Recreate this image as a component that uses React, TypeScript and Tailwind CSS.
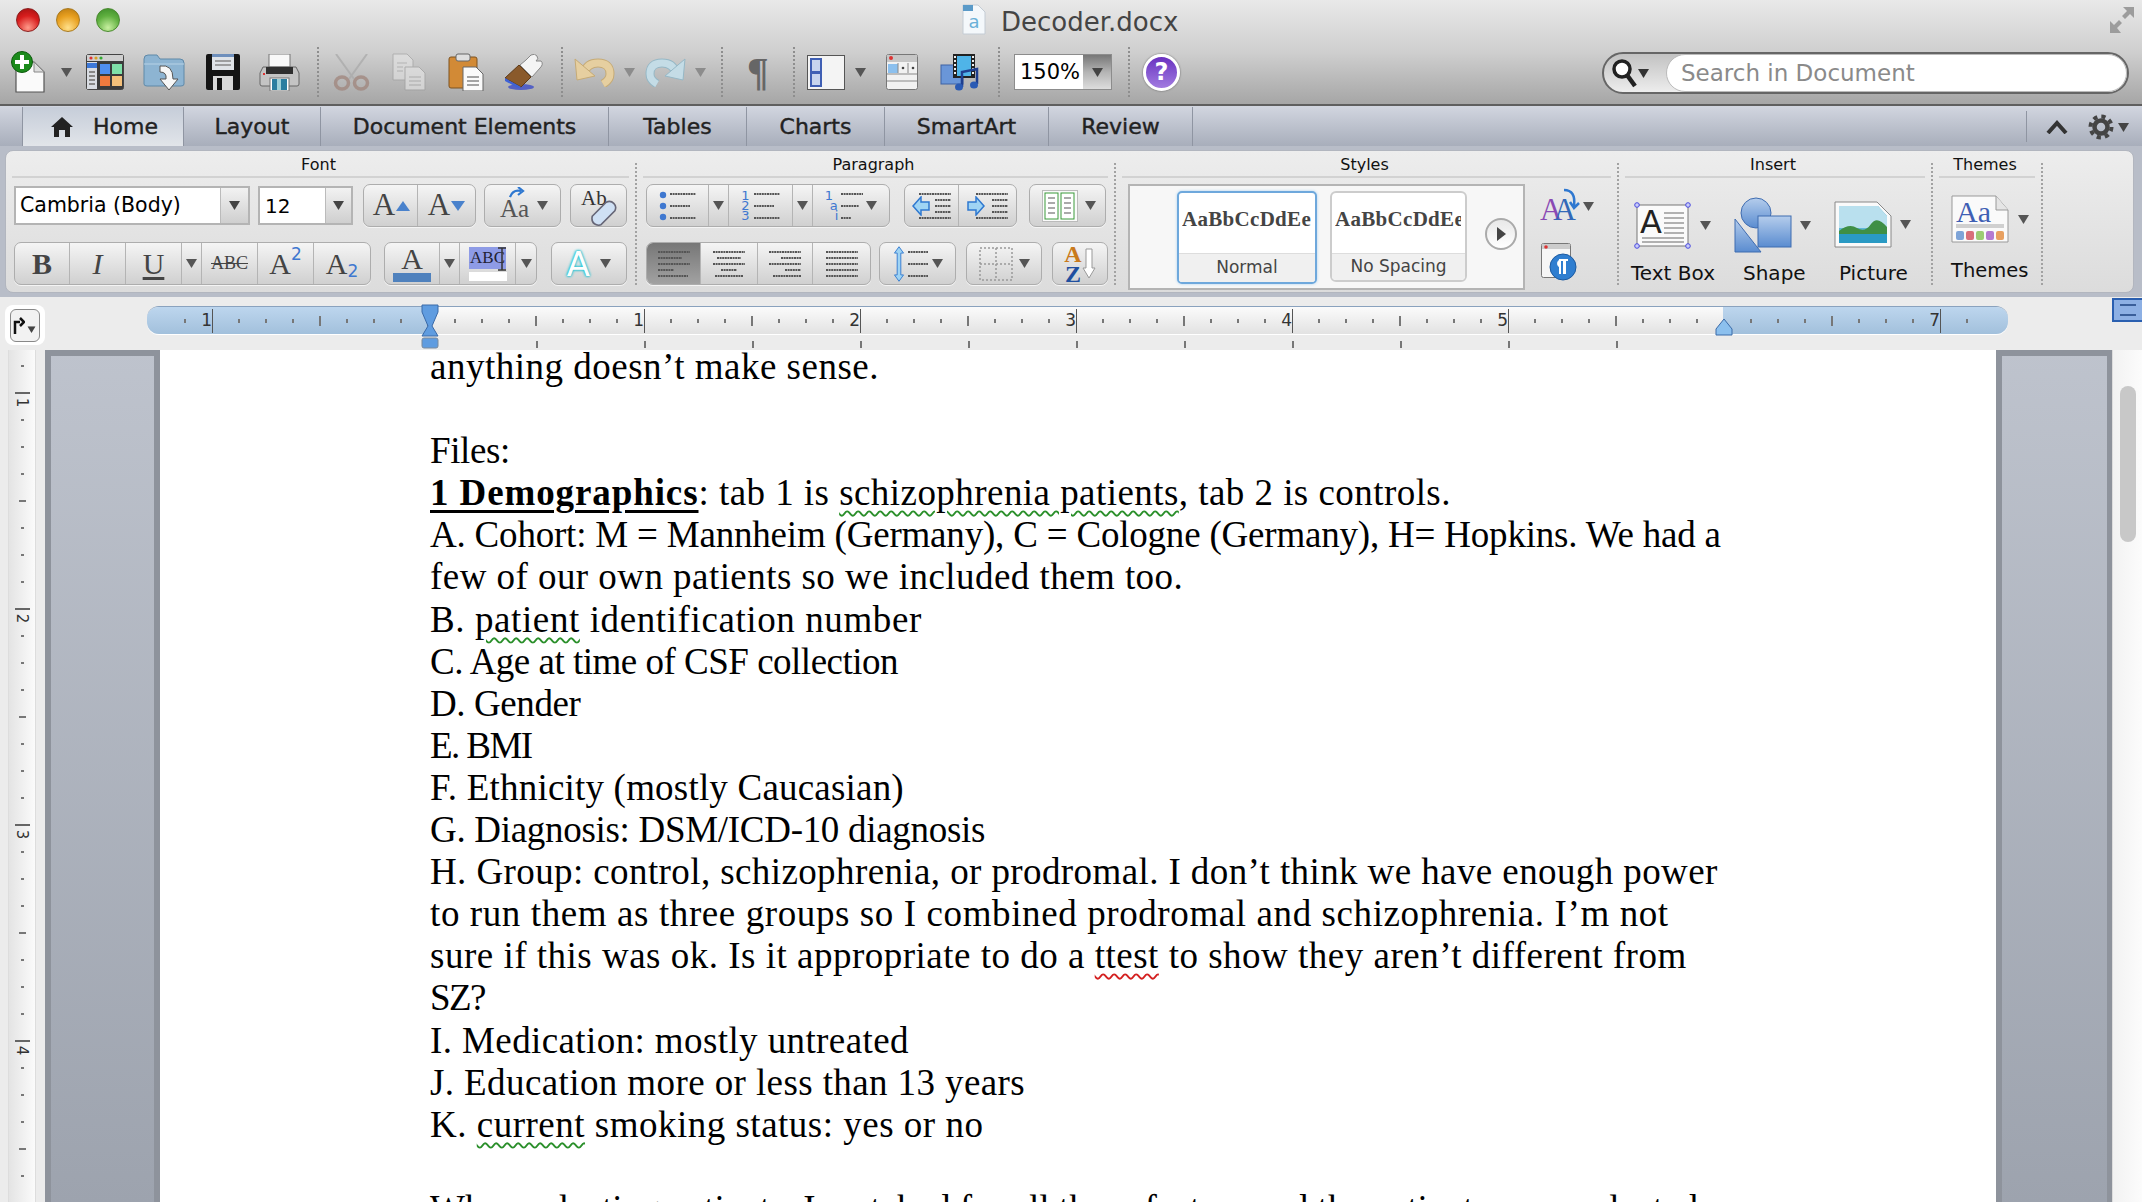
import type { ReactNode } from 'react';

const ui = "[font-family:'DejaVu_Sans',sans-serif]";
const serif = "[font-family:'Liberation_Serif',serif]";

function Tri({ className = '', fill = '#555' }: { className?: string; fill?: string }) {
  return (
    <svg width="11" height="9" viewBox="0 0 11 9" className={`shrink-0 ${className}`}>
      <path d="M0 0h11L5.5 9z" fill={fill} />
    </svg>
  );
}

function Lines({ w = 30, rows = [30, 22, 30, 16, 30] }: { w?: number; rows?: number[] }) {
  return (
    <svg width={w} height={rows.length * 6} viewBox={`0 0 ${w} ${rows.length * 6}`}>
      {rows.map((r, i) => (
        <line key={i} x1="0" x2={r} y1={i * 6 + 3} y2={i * 6 + 3} stroke="#555" strokeWidth="2" strokeDasharray="2 .6" />
      ))}
    </svg>
  );
}

function OffsetLines({ rows }: { rows: number[][] }) {
  return (
    <svg width="32" height="30" viewBox="0 0 32 30">
      {rows.map(([a, b], i) => (
        <line key={i} x1={a} x2={a + b} y1={i * 6 + 3} y2={i * 6 + 3} stroke="#555" strokeWidth="2" strokeDasharray="2 .6" />
      ))}
    </svg>
  );
}

function Group({ className = '', children }: { className?: string; children: ReactNode }) {
  return (
    <div className={`flex h-[43px] shrink-0 overflow-hidden rounded-[7px] border border-[#adadad] bg-linear-to-b from-[#f5f5f5] to-[#d0d0d0] shadow-[0_1px_0_#f4f4f4] ${className}`}>
      {children}
    </div>
  );
}

function Cell({ className = '', children }: { className?: string; children?: ReactNode }) {
  return (
    <div className={`flex h-full shrink-0 items-center justify-center border-r border-[#b4b4b4] last:border-r-0 ${className}`}>
      {children}
    </div>
  );
}

function Sep() {
  return <div className="mt-[12px] mb-[7px] w-0 shrink-0 border-l-2 border-dotted border-[#a2a2a2]" />;
}

function ToolSep({ className = '' }: { className?: string }) {
  return <div className={`h-[50px] w-0 shrink-0 border-l-2 border-dotted border-[#8e8e8e] ${className}`} />;
}

function GroupHead({ label }: { label: string }) {
  return (
    <div className={`mx-[6px] flex h-[27px] shrink-0 justify-center border-b-2 border-[#d2d2d2] pt-[3px] pr-[4px] text-[16px] leading-[22px] text-[#111] ${ui}`}>
      {label}
    </div>
  );
}

function NewDocIcon() {
  return (
    <svg width="36" height="42" viewBox="0 0 36 42">
      <path d="M5 11h18l10 10v20H5z" fill="#fafafa" stroke="#555" strokeWidth="1.2" />
      <path d="M23 11v10h10z" fill="#ddd" stroke="#888" />
      <circle cx="11" cy="11" r="10.500" fill="#1b8a1b" stroke="#0d5a0d" />
      <path d="M9 4h4v5h5v4h-5v5H9v-5H4V9h5z" fill="#fff" />
    </svg>
  );
}

function GalleryIcon() {
  return (
    <svg width="38" height="36" viewBox="0 0 38 36">
      <rect x=".5" y=".5" width="37" height="35" rx="2" fill="#3b3b3b" stroke="#444" />
      <rect x="1" y="1" width="36" height="6" fill="#cfcfcf" />
      <circle cx="5" cy="4" r="1.600" fill="#d33" />
      <circle cx="10" cy="4" r="1.600" fill="#d9a020" />
      <circle cx="15" cy="4" r="1.600" fill="#3a3" />
      <rect x="1" y="8" width="10" height="27" fill="#d8dce2" />
      <rect x="1" y="9" width="10" height="5" fill="#3c78d8" />
      <path d="M3 18h6M3 22h6M3 26h6M3 30h6" stroke="#888" strokeWidth="2" />
      <rect x="14" y="10" width="10" height="10" fill="#4f8ef0" />
      <rect x="26" y="10" width="10" height="10" fill="#7fe0a8" />
      <rect x="14" y="22" width="10" height="10" fill="#ef7a3e" />
      <rect x="26" y="22" width="10" height="10" fill="#f4c07a" />
    </svg>
  );
}

function OpenIcon() {
  return (
    <svg width="42" height="38" viewBox="0 0 42 38">
      <path d="M1 6q0-4 4-4h9l3 4h20q4 0 4 4v21q0 2-3 2H4q-3 0-3-2z" fill="#8db4d2" stroke="#5f89a8" />
      <path d="M1 11h40" stroke="#b7d2e6" />
      <path d="M17 13q13-2 13 13h5l-9 11-9-11h6q1-7-6-7z" fill="#f7f7f7" stroke="#555" />
    </svg>
  );
}

function SaveIcon() {
  return (
    <svg width="36" height="36" viewBox="0 0 36 36">
      <path d="M1 2q0-2 2-2h30q2 0 2 2v32q0 2-2 2H3q-2 0-2-2z" fill="#151515" />
      <rect x="7" y="0" width="22" height="16" fill="#dfe3e8" />
      <rect x="7" y="0" width="22" height="3" fill="#6e8fbc" />
      <path d="M10 7h16M10 11h16" stroke="#888" strokeWidth="1.5" />
      <rect x="8" y="22" width="20" height="14" fill="#d8d8d8" />
      <rect x="12" y="24" width="5" height="12" fill="#111" />
    </svg>
  );
}

function PrintIcon() {
  return (
    <svg width="41" height="37" viewBox="0 0 41 37">
      <rect x="10" y="0" width="21" height="13" fill="#f8f8f8" stroke="#777" />
      <path d="M4 13h33l3 6v11q0 2-2 2H3q-2 0-2-2V19z" fill="#c4c4c4" stroke="#666" />
      <rect x="7" y="13" width="27" height="7" fill="#2f2f2f" />
      <rect x="4" y="19" width="2" height="2" fill="#d33" />
      <rect x="11" y="24" width="19" height="13" fill="#fff" stroke="#777" />
      <rect x="13" y="25" width="15" height="11" fill="#2b7ea0" />
      <path d="M18 25h4v11h-4z" fill="#9fd0d8" />
    </svg>
  );
}

function ScissorsIcon() {
  return (
    <svg width="37" height="37" viewBox="0 0 37 37" opacity=".75">
      <path d="M3 0l18 25M34 0L16 25" stroke="#aaa" strokeWidth="2" fill="none" />
      <ellipse cx="9" cy="29" rx="6.500" ry="6" fill="none" stroke="#a0857c" strokeWidth="3.500" />
      <ellipse cx="28" cy="29" rx="6.500" ry="6" fill="none" stroke="#a0857c" strokeWidth="3.500" />
    </svg>
  );
}

function CopyIcon() {
  return (
    <svg width="34" height="38" viewBox="0 0 34 38" opacity=".55">
      <path d="M1 1h14l6 6v20H1z" fill="#e9e9e9" stroke="#999" />
      <path d="M13 14h14l6 6v17H13z" fill="#eee" stroke="#999" />
      <path d="M17 24h12M17 28h12M17 32h12M5 10h10M5 14h6M5 18h6" stroke="#bbb" strokeWidth="1.5" />
    </svg>
  );
}

function PasteIcon() {
  return (
    <svg width="36" height="38" viewBox="0 0 36 38">
      <rect x="1" y="4" width="28" height="31" rx="2" fill="#d28a36" stroke="#7d5220" />
      <rect x="8" y="1" width="14" height="7" rx="2" fill="#dfdfdf" stroke="#666" />
      <path d="M15 14h13l7 7v17H15z" fill="#fafafa" stroke="#666" />
      <path d="M19 24h12M19 28h12M19 32h12" stroke="#888" strokeWidth="1.5" />
    </svg>
  );
}

function BrushIcon() {
  return (
    <svg width="41" height="36" viewBox="0 0 41 36">
      <ellipse cx="17" cy="33" rx="13" ry="3" fill="#3c4cc8" opacity=".8" />
      <path d="M15 11l12 12-10 10L1 24z" fill="#8a5a2b" stroke="#5e3a17" />
      <path d="M1 24l16 9-3 1L1 27z" fill="#3f62d6" />
      <path d="M16 11l6-5 5-5q4-2 6 1t-1 5l5 0q3 3-1 7l-8 9z" fill="#f4f4f4" stroke="#888" />
    </svg>
  );
}

function UndoIcon({ flip = false, color = '#e6cfa0', stroke = '#c6ab76' }: { flip?: boolean; color?: string; stroke?: string }) {
  const arc = 'M10 16Q13 6 24 6Q36 6 36 17Q36 23 29 27';
  return (
    <svg width="41" height="30" viewBox="0 0 41 30" className={flip ? '-scale-x-100' : ''}>
      <path d={arc} fill="none" stroke={stroke} strokeWidth="9" />
      <path d={arc} fill="none" stroke={color} strokeWidth="7" />
      <path d="M1 2l2 21 18-4z" fill={color} stroke={stroke} />
    </svg>
  );
}

function SidebarIcon() {
  return (
    <svg width="38" height="35" viewBox="0 0 38 35">
      <rect x=".5" y=".5" width="37" height="34" fill="#f4f4f4" stroke="#555" />
      <rect x="3" y="3" width="12" height="29" fill="#3f5fb4" />
      <rect x="5" y="5" width="8" height="11" fill="#c7d4ee" />
      <rect x="5" y="19" width="8" height="11" fill="#c7d4ee" />
    </svg>
  );
}

function ToolboxIcon() {
  return (
    <svg width="32" height="36" viewBox="0 0 32 36">
      <rect x=".5" y=".5" width="31" height="35" rx="2" fill="#f2f2f2" stroke="#777" />
      <rect x="1" y="1" width="30" height="7" fill="#c6c6c6" />
      <circle cx="5" cy="4" r="2" fill="#d33" />
      <rect x="2" y="10" width="10" height="9" fill="#8cc0ee" />
      <path d="M1 20h30M1 27h30M12 9v10M22 9v10" stroke="#888" />
      <circle cx="17" cy="14" r="1.300" fill="#444" />
      <circle cx="27" cy="14" r="1.300" fill="#444" />
    </svg>
  );
}

function MediaIcon() {
  return (
    <svg width="40" height="37" viewBox="0 0 40 37">
      <rect x="1" y="11" width="22" height="19" fill="#6a96d8" stroke="#3e62a4" />
      <rect x="13" y="0" width="22" height="24" fill="#222" />
      <rect x="17" y="2" width="14" height="20" fill="#4fb4e8" />
      <path d="M15 2v20M33 2v20" stroke="#eee" strokeWidth="2" strokeDasharray="2 2" />
      <path d="M22 33V18l15-3v15" fill="none" stroke="#1f3f8f" strokeWidth="2.500" />
      <ellipse cx="19" cy="33" rx="4" ry="3.500" fill="#2a5ab4" />
      <ellipse cx="34" cy="31" rx="4" ry="3.500" fill="#2a5ab4" />
    </svg>
  );
}

function SearchGlass() {
  return (
    <svg width="26" height="30" viewBox="0 0 26 30">
      <circle cx="11" cy="11" r="8" fill="#fff" stroke="#222" strokeWidth="3.500" />
      <path d="M16 17l8 11" stroke="#222" strokeWidth="4.500" />
    </svg>
  );
}

function TextBoxIcon() {
  return (
    <div className="relative h-[47px] w-[57px] shrink-0">
      <svg width="57" height="47" viewBox="0 0 57 47">
        <rect x="3" y="3" width="51" height="41" fill="#fafafa" stroke="#777" />
        <path d="M30 11h20M30 16h20M30 21h20M30 26h20M30 31h20M8 36h42M8 40h42" stroke="#999" strokeWidth="1.500" />
        {[[3, 3], [54, 3], [3, 44], [54, 44]].map(([x, y]) => (
          <circle key={x * y + x} cx={x} cy={y} r="2.300" fill="#c9cdf8" stroke="#4a4ae0" />
        ))}
      </svg>
      <span className={`absolute top-[4px] left-[6px] text-[32px] leading-[32px] text-[#222] ${ui}`}>A</span>
    </div>
  );
}

function ShapeIcon() {
  return (
    <svg width="58" height="56" viewBox="0 0 58 56">
      <defs>
        <linearGradient id="shapeBlue" x1="0" y1="0" x2="0" y2="1">
          <stop offset="0" stopColor="#b5cdec" />
          <stop offset="1" stopColor="#5a8cd0" />
        </linearGradient>
      </defs>
      <path d="M1 22l26 33H1z" fill="url(#shapeBlue)" stroke="#3f6cb0" />
      <circle cx="22" cy="16" r="15" fill="url(#shapeBlue)" stroke="#3f6cb0" />
      <rect x="24" y="19" width="33" height="31" fill="url(#shapeBlue)" stroke="#3f6cb0" />
    </svg>
  );
}

function PictureIcon() {
  return (
    <svg width="58" height="47" viewBox="0 0 58 47">
      <path d="M1 1h42l14 14v31H1z" fill="#fafafa" stroke="#888" />
      <path d="M5 5h39l9 10v27H5z" fill="#5fb7d8" />
      <path d="M5 5h39l9 10v12H5z" fill="#b9e0ee" />
      <path d="M5 30q10-8 18-3t14-4 16 3v8H5z" fill="#3f8f45" />
      <rect x="5" y="33" width="48" height="9" fill="#2a9ac4" />
    </svg>
  );
}

function ThemesIcon() {
  return (
    <svg width="58" height="48" viewBox="0 0 58 48">
      <path d="M1 1h44l12 14v32H1z" fill="#fafafa" stroke="#999" />
      <path d="M45 1v14h12" fill="#e5e5e5" stroke="#999" />
      <rect x="5" y="29" width="48" height="4" fill="#d0d0d0" />
      {['#7ea4d8', '#d8707a', '#9ccc74', '#b47ad0', '#e8a060'].map((c, i) => (
        <rect key={c} x={5 + i * 10} y="36" width="8" height="9" rx="2" fill={c} />
      ))}
    </svg>
  );
}

function AaStyleIcon() {
  return (
    <div className={`relative flex h-[37px] w-[38px] items-end text-[31px] leading-[31px] ${serif}`}>
      <span className="text-[#8a4ab4]">A</span>
      <span className="-ml-[9px] text-[#3268b8]">A</span>
      <svg width="18" height="24" viewBox="0 0 18 24" className="absolute top-0 left-[22px]">
        <path d="M2 2q12 0 10 16M8 14l4 6 5-5" fill="none" stroke="#2f78d0" strokeWidth="2.500" />
      </svg>
    </div>
  );
}

function ParaStyleIcon() {
  return (
    <svg width="37" height="38" viewBox="0 0 37 38">
      <rect x=".5" y=".5" width="29" height="34" rx="2" fill="#f6f6f6" stroke="#777" />
      <rect x="1" y="1" width="28" height="5" fill="#ccc" />
      <circle cx="5" cy="4" r="1.800" fill="#d33" />
      <circle cx="22" cy="24" r="13" fill="#2f7ed0" stroke="#1c5aa0" />
      <path d="M19 31V17h8M23 31V17M24 31V17" stroke="#fff" strokeWidth="2" fill="none" />
      <path d="M20 17a3.500 3.500 0 000 7" fill="#fff" stroke="#fff" />
    </svg>
  );
}

function RulerTick({ k }: { k: number }) {
  const numbers: Record<number, string> = { [-8]: '1', 8: '1', 16: '2', 24: '3', 32: '4', 40: '5', 56: '7' };
  const label = numbers[k];
  return (
    <div className="flex h-full w-[27px] shrink-0 items-center justify-end">
      {label ? (
        <>
          <span className={`mr-[1px] text-[17px] leading-none text-[#333] ${ui}`}>{label}</span>
          <span className="h-[24px] w-px -translate-x-[1px] bg-[#555]" />
        </>
      ) : (
        <span className={`w-[2px] translate-x-[-1px] bg-[#777] ${k % 4 === 0 ? 'h-[10px]' : 'h-[4px]'}`} />
      )}
    </div>
  );
}

function range(a: number, b: number) {
  return Array.from({ length: b - a + 1 }, (_, i) => a + i);
}

function VRulerTick({ i }: { i: number }) {
  const label = i % 8 === 1 ? String((i - 1) / 8 + 1) : '';
  return (
    <div className="flex h-[27px] shrink-0 flex-col items-center">
      {label ? (
        <>
          <span className="h-[2px] w-[15px] shrink-0 bg-[#666]" />
          <span className={`mt-[1px] rotate-90 text-[15px] leading-none text-[#333] ${ui}`}>{label}</span>
        </>
      ) : (
        <span className={`h-[2px] bg-[#777] ${i % 4 === 1 ? 'w-[7px]' : 'w-[3px]'}`} />
      )}
    </div>
  );
}

function Squiggle({ children, color = 'decoration-[#2a8f2a]' }: { children: ReactNode; color?: string }) {
  return <span className={`underline decoration-wavy decoration-[2px] underline-offset-[5px] ${color}`}>{children}</span>;
}

const docLine = 'h-[42.1px] whitespace-nowrap';

export default function App() {
  return (
    <div className="flex h-[1202px] w-[2142px] flex-col overflow-hidden bg-[#ececec]">
      {/* Title bar and toolbar */}
      <header className="h-[104px] shrink-0 bg-linear-to-b from-[#e9e9e9] via-[#cfcfcf] to-[#a6a6a6]">
        <div className="flex h-[40px] items-start pt-[8px]">
          <div className="ml-[16px] flex gap-[16px]">
            <span className="size-[24px] rounded-full border border-[#8a2020] bg-[radial-gradient(circle_at_50%_85%,#ff9a8a,#d81e1e_55%,#a01010)]" />
            <span className="size-[24px] rounded-full border border-[#a87a20] bg-[radial-gradient(circle_at_50%_85%,#ffe08a,#e8a020_55%,#b87810)]" />
            <span className="size-[24px] rounded-full border border-[#4a8a30] bg-[radial-gradient(circle_at_50%_85%,#c8f0a0,#60b040_55%,#3a8a28)]" />
          </div>
          <svg width="24" height="31" viewBox="0 0 24 31" className="-mt-[4px] ml-[842px] shrink-0">
            <path d="M1 1h15l7 7v22H1z" fill="#f4f8fb" stroke="#c4ccd4" />
            <rect x="1" y="1" width="10" height="6" fill="#5a9ac8" />
            <text x="12" y="24" fontSize="18" textAnchor="middle" fill="#6ab0d8" fontFamily="DejaVu Sans">a</text>
          </svg>
          <span className={`ml-[15px] text-[26px] leading-[28px] text-[#444] ${ui}`}>Decoder.docx</span>
          <svg width="26" height="28" viewBox="0 0 26 28" className="-mt-[2px] ml-[931px] shrink-0">
            <path d="M14 1h11v11l-4-4-5 5-3-3 5-5zM1 27V15l4 4 5-5 3 3-5 5 4 5z" fill="#9c9c9c" />
          </svg>
        </div>

        <div className="flex h-[64px] items-center">
          <div className="ml-[11px]"><NewDocIcon /></div>
          <Tri className="ml-[14px]" />
          <div className="ml-[14px]"><GalleryIcon /></div>
          <div className="ml-[19px]"><OpenIcon /></div>
          <div className="ml-[20px]"><SaveIcon /></div>
          <div className="ml-[18px]"><PrintIcon /></div>
          <ToolSep className="ml-[17px]" />
          <div className="ml-[14px]"><ScissorsIcon /></div>
          <div className="ml-[22px]"><CopyIcon /></div>
          <div className="ml-[22px]"><PasteIcon /></div>
          <div className="ml-[20px]"><BrushIcon /></div>
          <ToolSep className="ml-[16px]" />
          <div className="ml-[11px]"><UndoIcon /></div>
          <Tri className="ml-[9px]" fill="#8c8c8c" />
          <div className="ml-[10px]"><UndoIcon flip color="#c4dce6" stroke="#96b8c6" /></div>
          <Tri className="ml-[9px]" fill="#8c8c8c" />
          <ToolSep className="ml-[15px]" />
          <span className={`ml-[24px] w-[24px] text-[40px] leading-none font-bold text-[#666] ${serif}`}>¶</span>
          <ToolSep className="ml-[22px]" />
          <div className="ml-[12px]"><SidebarIcon /></div>
          <Tri className="ml-[10px]" />
          <div className="ml-[20px]"><ToolboxIcon /></div>
          <div className="ml-[22px]"><MediaIcon /></div>
          <ToolSep className="ml-[18px]" />
          <div className="ml-[14px] flex h-[36px] w-[98px] shrink-0 border border-[#8c8c8c] bg-white">
            <span className={`flex w-[68px] items-center pl-[5px] text-[21px] leading-none text-black ${ui}`}>150%</span>
            <span className="flex flex-1 items-center justify-center bg-linear-to-b from-[#777] via-[#b4b4b4] to-[#ddd]">
              <Tri fill="#444" />
            </span>
          </div>
          <ToolSep className="ml-[16px]" />
          <div className={`ml-[13px] flex size-[37px] shrink-0 items-center justify-center rounded-full border-[3px] border-white bg-linear-to-b from-[#6a2fc0] to-[#a27ae0] text-[24px] leading-none font-bold text-white shadow-[0_0_2px_#555] ${ui}`}>?</div>
          <div className="mt-[2px] ml-[422px] flex h-[42px] w-[527px] shrink-0 rounded-full border-2 border-[#666] bg-linear-to-b from-[#c2c2c2] to-[#ededed]">
            <div className="flex w-[62px] shrink-0 items-center pl-[7px]">
              <SearchGlass />
              <Tri fill="#333" className="ml-[1px]" />
            </div>
            <div className={`flex flex-1 items-center rounded-full border border-[#bbb] bg-white pl-[14px] text-[23px] leading-none text-[#8a8a8a] ${ui}`}>
              Search in Document
            </div>
          </div>
        </div>
      </header>
      <div className="h-[2px] shrink-0 bg-[#5f5f5f]" />

      {/* Tabs */}
      <nav className={`flex h-[40px] shrink-0 items-stretch bg-linear-to-b from-[#d2d6e0] to-[#a8aebb] pt-[1px] text-[22px] text-[#222] [-webkit-text-stroke:0.4px_#222] ${ui}`}>
        <div className="w-[23px] border-r border-[#8f95a2]" />
        <div className="-mb-[4px] flex w-[160px] items-center gap-[20px] bg-linear-to-b from-[#c6cdd9] to-[#e4e7eb] pb-[4px] pl-[28px]">
          <svg width="22" height="20" viewBox="0 0 22 20" className="shrink-0">
            <path d="M11 0l11 10h-3v10h-5v-7H8v7H3V10H0z" fill="#222" />
          </svg>
          <span>Home</span>
        </div>
        <div className="flex w-[138px] items-center justify-center border-x border-[#8f95a2]">Layout</div>
        <div className="flex w-[288px] items-center justify-center border-r border-[#8f95a2]">Document Elements</div>
        <div className="flex w-[138px] items-center justify-center border-r border-[#8f95a2]">Tables</div>
        <div className="flex w-[138px] items-center justify-center border-r border-[#8f95a2]">Charts</div>
        <div className="flex w-[164px] items-center justify-center border-r border-[#8f95a2]">SmartArt</div>
        <div className="flex w-[144px] items-center justify-center border-r border-[#8f95a2]">Review</div>
        <div className="my-[4px] ml-[833px] w-px bg-[#8f95a2]" />
        <svg width="22" height="14" viewBox="0 0 22 14" className="mt-[13px] ml-[19px]">
          <path d="M2 13l9-10 9 10" fill="none" stroke="#333" strokeWidth="4" />
        </svg>
        <svg width="26" height="26" viewBox="0 0 26 26" className="mt-[7px] ml-[20px]">
          <circle cx="13" cy="13" r="6.500" fill="none" stroke="#444" strokeWidth="4.500" />
          <circle cx="13" cy="13" r="10.500" fill="none" stroke="#444" strokeWidth="4" strokeDasharray="4.200 4.050" />
        </svg>
        <Tri className="mt-[16px] ml-[4px]" fill="#444" />
      </nav>

      {/* Ribbon */}
      <div className="h-[149px] shrink-0 bg-[#b8bdc8] px-[5px] pt-[4px] pb-[2px]">
        <div className="flex h-full w-[2129px] rounded-t-[8px] rounded-b-[8px] border border-[#b2b6bf] bg-linear-to-b from-[#ededed] to-[#dcdcdc]">
          {/* Font */}
          <section className="flex w-[629px] shrink-0 flex-col">
            <GroupHead label="Font" />
            <div className="mt-[8px] flex pl-[8px]">
              <div className="flex h-[39px] w-[236px] shrink-0 border-2 border-[#b4b4b4] bg-white">
                <span className={`flex w-[205px] items-center border-r border-[#bbb] pl-[4px] text-[20.500px] leading-none text-black ${ui}`}>Cambria (Body)</span>
                <span className="flex flex-1 items-center justify-center bg-linear-to-b from-[#f2f2f2] to-[#cfcfcf]"><Tri fill="#444" /></span>
              </div>
              <div className="ml-[8px] flex h-[39px] w-[95px] shrink-0 border-2 border-[#b4b4b4] bg-white">
                <span className={`flex w-[66px] items-center border-r border-[#bbb] pl-[5px] text-[20px] leading-none text-black ${ui}`}>12</span>
                <span className="flex flex-1 items-center justify-center bg-linear-to-b from-[#f2f2f2] to-[#cfcfcf]"><Tri fill="#444" /></span>
              </div>
              <Group className="-mt-[2px] ml-[10px]">
                <Cell className={`w-[54px] gap-[1px] pl-[2px] text-[31px] text-[#444] ${serif}`}>A<svg width="14" height="10" viewBox="0 0 14 10"><path d="M7 0l7 10H0z" fill="#4a82cc" /></svg></Cell>
                <Cell className={`w-[57px] gap-[1px] text-[31px] text-[#444] ${serif}`}>A<svg width="14" height="10" viewBox="0 0 14 10"><path d="M7 10l7-10H0z" fill="#4a82cc" /></svg></Cell>
              </Group>
              <Group className="-mt-[2px] ml-[8px]">
                <Cell className="w-[75px] gap-[8px] pl-[3px]">
                  <div className={`relative flex h-full items-end pb-[3px] text-[25px] leading-[28px] text-[#555] ${serif}`}>
                    Aa
                    <svg width="17" height="12" viewBox="0 0 17 12" className="absolute top-[2px] left-[9px]">
                      <path d="M1 10q3-8 11-6M9 0l5 4-5 4" fill="none" stroke="#2f78d0" strokeWidth="2.200" />
                    </svg>
                  </div>
                  <Tri />
                </Cell>
              </Group>
              <Group className="-mt-[2px] ml-[9px]">
                <Cell className="relative w-[55px]">
                  <span className={`absolute top-[1px] left-[10px] text-[21px] leading-[24px] text-[#333] ${serif}`}>Ab</span>
                  <svg width="28" height="28" viewBox="0 0 26 26" className="absolute top-[14px] left-[18px]">
                    <path d="M3 16L16 3q4-2 7 1t1 7L11 24q-3 1-6-1t-2-7z" fill="#cfe0f4" stroke="#667" strokeWidth="1.500" />
                  </svg>
                </Cell>
              </Group>
            </div>
            <div className="mt-[15px] flex pl-[8px]">
              <Group>
                <Cell className={`w-[55px] text-[30px] font-bold text-[#444] ${serif}`}>B</Cell>
                <Cell className={`w-[56px] text-[30px] text-[#444] italic ${serif}`}>I</Cell>
                <Cell className={`w-[56px] text-[30px] text-[#444] underline underline-offset-[3px] ${serif}`}>U</Cell>
                <Cell className="w-[20px]"><Tri /></Cell>
                <Cell className={`w-[56px] text-[18px] text-[#444] line-through ${serif}`}>ABC</Cell>
                <Cell className={`w-[56px] items-start text-[30px] text-[#444] ${serif}`}>
                  <span className="mt-[1px] leading-[40px]">A</span>
                  <span className={`text-[17px] leading-[22px] text-[#3f78d0] ${ui}`}>2</span>
                </Cell>
                <Cell className={`w-[56px] text-[30px] text-[#444] ${serif}`}>
                  A<span className={`mt-[14px] text-[17px] leading-[22px] text-[#3f78d0] ${ui}`}>2</span>
                </Cell>
              </Group>
              <Group className="ml-[13px]">
                <Cell className={`w-[55px] flex-col text-[30px] leading-[28px] text-[#444] ${serif}`}>
                  A
                  <span className="h-[9px] w-[38px] shrink-0 bg-[#4f81bd]" />
                </Cell>
                <Cell className="w-[20px]"><Tri /></Cell>
                <Cell className="relative w-[56px] flex-col">
                  <span className={`bg-[#8e9be6] px-[1px] text-[17px] leading-[22px] text-[#223] ${serif}`}>ABC</span>
                  <span className="mt-[3px] h-[9px] w-[38px] shrink-0 bg-white" />
                  <svg width="8" height="24" viewBox="0 0 8 24" className="absolute top-[4px] left-[38px]">
                    <path d="M0 1h8M0 23h8M4 1v22" stroke="#333" strokeWidth="1.500" />
                  </svg>
                </Cell>
                <Cell className="w-[20px]"><Tri /></Cell>
              </Group>
              <Group className="ml-[14px]">
                <Cell className="w-[74px] gap-[10px]">
                  <span className={`text-[34px] leading-none text-[#fdfdfd] [text-shadow:0_0_3px_#27c6d6,0_0_3px_#27c6d6,0_0_2px_#27c6d6] ${ui}`}>A</span>
                  <Tri />
                </Cell>
              </Group>
            </div>
          </section>
          <Sep />

          {/* Paragraph */}
          <section className="flex w-[477px] shrink-0 flex-col">
            <GroupHead label="Paragraph" />
            <div className="mt-[6px] flex pl-[9px]">
              <Group>
                <Cell className="w-[62px] gap-[3px]">
                  <svg width="8" height="30" viewBox="0 0 8 30">
                    <circle cx="4" cy="4" r="3.200" fill="#3f78d0" />
                    <circle cx="4" cy="15" r="3.200" fill="#3f78d0" />
                    <circle cx="4" cy="26" r="3.200" fill="#3f78d0" />
                  </svg>
                  <Lines w={26} rows={[26, 0, 20, 0, 26]} />
                </Cell>
                <Cell className="w-[20px]"><Tri /></Cell>
                <Cell className="w-[64px] gap-[4px]">
                  <div className={`flex flex-col text-[13px] leading-[10px] text-[#3f78d0] ${ui}`}><span>1</span><span>2</span><span>3</span></div>
                  <Lines w={26} rows={[26, 0, 20, 0, 26]} />
                </Cell>
                <Cell className="w-[20px]"><Tri /></Cell>
                <Cell className="w-[76px] gap-[3px]">
                  <div className={`flex flex-col text-[13px] leading-[10px] text-[#3f78d0] ${ui}`}>
                    <span>1</span><span className="pl-[5px]">a</span><span className="pl-[10px]">i</span>
                  </div>
                  <Lines w={22} rows={[22, 0, 18, 0, 10]} />
                  <Tri />
                </Cell>
              </Group>
              <Group className="ml-[14px]">
                <Cell className="relative w-[54px] justify-end pr-[7px]">
                  <OffsetLines rows={[[0, 32], [16, 16], [16, 16], [16, 16], [0, 32]]} />
                  <svg width="18" height="20" viewBox="0 0 18 20" className="absolute top-[11px] left-[7px]">
                    <path d="M9 1L1 10l8 9v-5h8V6H9z" fill="#9fd4f4" stroke="#2f78d0" strokeWidth="1.500" />
                  </svg>
                </Cell>
                <Cell className="relative w-[57px] justify-end pr-[8px]">
                  <OffsetLines rows={[[0, 32], [16, 16], [16, 16], [16, 16], [0, 32]]} />
                  <svg width="18" height="20" viewBox="0 0 18 20" className="absolute top-[11px] left-[8px]">
                    <path d="M9 1l8 9-8 9v-5H1V6h8z" fill="#9fd4f4" stroke="#2f78d0" strokeWidth="1.500" />
                  </svg>
                </Cell>
              </Group>
              <Group className="ml-[12px]">
                <Cell className="w-[75px] gap-[7px] pl-[2px]">
                  <svg width="36" height="32" viewBox="0 0 36 32">
                    <rect x=".5" y=".5" width="35" height="31" fill="#fafafa" stroke="#bbb" />
                    <rect x="3" y="3" width="13" height="26" fill="#fff" stroke="#3a9a3a" />
                    <rect x="19" y="3" width="13" height="26" fill="#fff" stroke="#3a9a3a" />
                    <path d="M6 8h7M6 13h7M6 18h7M6 23h7M22 8h7M22 13h7M22 18h7M22 23h7" stroke="#aaa" strokeWidth="2" />
                  </svg>
                  <Tri />
                </Cell>
              </Group>
            </div>
            <div className="mt-[15px] flex pl-[9px]">
              <Group>
                <Cell className="w-[54px] bg-linear-to-b from-[#777] to-[#a2a2a2]"><Lines w={32} rows={[32, 24, 32, 16, 30]} /></Cell>
                <Cell className="w-[57px]"><OffsetLines rows={[[0, 32], [4, 24], [0, 32], [8, 16], [2, 28]]} /></Cell>
                <Cell className="w-[55px]"><OffsetLines rows={[[0, 32], [12, 20], [0, 32], [16, 16], [4, 28]]} /></Cell>
                <Cell className="w-[57px]"><Lines w={32} rows={[32, 32, 32, 32, 32]} /></Cell>
              </Group>
              <Group className="ml-[8px]">
                <Cell className="w-[75px] gap-[2px]">
                  <svg width="14" height="40" viewBox="0 0 14 44">
                    <path d="M7 3l5 7H9v24h3l-5 7-5-7h3V10H2z" fill="#9fd4f4" stroke="#2f78d0" />
                  </svg>
                  <Lines w={20} rows={[20, 0, 20, 0, 20]} />
                  <Tri className="ml-[2px]" />
                </Cell>
              </Group>
              <Group className="ml-[10px]">
                <Cell className="w-[74px] gap-[6px]">
                  <svg width="34" height="34" viewBox="0 0 34 34">
                    <rect x="1" y="1" width="32" height="32" fill="none" stroke="#999" strokeWidth="1.500" strokeDasharray="2 2" />
                    <path d="M17 1v32M1 17h32" stroke="#999" strokeWidth="1.500" strokeDasharray="2 2" />
                  </svg>
                  <Tri />
                </Cell>
              </Group>
              <Group className="ml-[10px]">
                <Cell className="w-[54px] gap-0">
                  <div className={`flex flex-col items-center text-[24px] leading-[20px] font-bold ${serif}`}>
                    <span className="text-[#c97a1c]">A</span>
                    <span className="text-[#1f4f9f]">Z</span>
                  </div>
                  <svg width="14" height="32" viewBox="0 0 14 32">
                    <path d="M4 1h6v19h3l-6 10-6-10h3z" fill="#fff" stroke="#999" />
                  </svg>
                </Cell>
              </Group>
            </div>
          </section>
          <Sep />

          {/* Styles */}
          <section className="flex w-[501px] shrink-0 flex-col">
            <GroupHead label="Styles" />
            <div className="flex flex-1">
              <div className="mt-[6px] ml-[12px] flex h-[106px] w-[397px] shrink-0 border-2 border-[#b4b4b4] bg-[#f7f7f7] pt-[5px] pl-[47px]">
                <div className="flex h-[93px] w-[140px] shrink-0 flex-col overflow-hidden rounded-[5px] border-2 border-[#6ea8dc] bg-white shadow-[0_0_3px_#a8d0f0]">
                  <div className="mr-[4px] ml-[3px] h-[60px] shrink-0 overflow-hidden pt-[16px]">
                    <div className={`text-[21px] leading-none font-bold tracking-[.3px] whitespace-nowrap text-[#444] ${serif}`}>AaBbCcDdEe</div>
                  </div>
                  <div className={`flex flex-1 items-center justify-center border-t border-[#ddd] bg-[#f0f0f0] text-[17px] text-[#444] ${ui}`}>Normal</div>
                </div>
                <div className="ml-[13px] flex h-[91px] w-[137px] shrink-0 flex-col overflow-hidden rounded-[6px] border-2 border-[#ccc] bg-white">
                  <div className="mr-[4px] ml-[3px] h-[60px] shrink-0 overflow-hidden pt-[16px]">
                    <div className={`text-[21px] leading-none font-bold tracking-[.3px] whitespace-nowrap text-[#444] ${serif}`}>AaBbCcDdEe</div>
                  </div>
                  <div className={`flex flex-1 items-center justify-center border-t border-[#ddd] bg-[#f0f0f0] text-[17px] whitespace-nowrap text-[#444] ${ui}`}>No Spacing</div>
                </div>
                <div className="mt-[27px] ml-[18px] flex size-[32px] shrink-0 items-center justify-center rounded-full border-2 border-[#aaa] bg-linear-to-b from-[#e8e8e8] to-[#fff]">
                  <svg width="10" height="14" viewBox="0 0 10 14"><path d="M1 0l9 7-9 7z" fill="#444" /></svg>
                </div>
              </div>
              <div className="flex flex-1 flex-col">
                <div className="mt-[10px] flex items-center pl-[15px]">
                  <AaStyleIcon />
                  <Tri className="ml-[5px]" />
                </div>
                <div className="mt-[18px] pl-[16px]"><ParaStyleIcon /></div>
              </div>
            </div>
          </section>
          <Sep />

          {/* Insert */}
          <section className="flex w-[312px] shrink-0 flex-col">
            <GroupHead label="Insert" />
            <div className="flex flex-1">
              <div className="flex w-[113px] shrink-0 flex-col pt-[24px] pl-[15px]">
                <div className="flex h-[47px] items-center"><TextBoxIcon /><Tri className="ml-[9px]" /></div>
                <span className={`mt-[13px] -ml-[3px] text-[20px] leading-[22px] whitespace-nowrap text-[#111] ${ui}`}>Text Box</span>
              </div>
              <div className="flex w-[102px] shrink-0 flex-col pt-[19px] pl-[2px]">
                <div className="flex h-[56px] items-center"><ShapeIcon /><Tri className="ml-[8px]" /></div>
                <span className={`mt-[9px] ml-[9px] text-[20px] leading-[22px] text-[#111] ${ui}`}>Shape</span>
              </div>
              <div className="flex flex-1 flex-col pt-[23px]">
                <div className="flex h-[47px] items-center"><PictureIcon /><Tri className="ml-[8px]" /></div>
                <span className={`mt-[14px] ml-[5px] text-[20px] leading-[22px] text-[#111] ${ui}`}>Picture</span>
              </div>
            </div>
          </section>
          <Sep />

          {/* Themes */}
          <section className="flex w-[108px] shrink-0 flex-col">
            <GroupHead label="Themes" />
            <div className="flex flex-col pt-[17px] pl-[18px]">
              <div className="relative flex h-[48px] items-center">
                <ThemesIcon />
                <span className={`absolute top-[2px] left-[5px] text-[30px] leading-[30px] text-[#3f5fb4] ${serif}`}>Aa</span>
                <Tri className="ml-[9px]" />
              </div>
              <span className={`mt-[17px] text-[19.500px] leading-[22px] text-[#111] ${ui}`}>Themes</span>
            </div>
          </section>
          <Sep />
        </div>
      </div>

      {/* Horizontal ruler */}
      <div className="flex h-[55px] shrink-0 border-t-2 border-[#b8bdc8] bg-[#ececec]">
        <div className="mt-[8px] ml-[5px] flex size-[40px] shrink-0 items-center justify-center rounded-[8px] bg-white">
          <div className="flex h-[33px] w-[30px] items-center justify-center gap-[1px] rounded-[6px] border border-[#888] bg-[#f2f2f2]">
            <svg width="12" height="18" viewBox="0 0 12 18"><path d="M2 18V6h5M7 2l4 4-4 4" fill="none" stroke="#111" strokeWidth="2.500" /></svg>
            <Tri fill="#444" className="mt-[8px] scale-75" />
          </div>
        </div>
        <div className="relative ml-[102px] flex w-[1861px] shrink-0 flex-col pt-[9px]">
          <div className="flex h-[28px] overflow-hidden rounded-[12px] border-t border-[#8aa2be] shadow-[0_1px_0_#fff]">
            <div className="flex w-[283px] shrink-0 justify-end bg-linear-to-b from-[#bdd6ee] to-[#a2c0dc]">
              {range(-9, 0).map(k => <RulerTick key={k} k={k} />)}
            </div>
            <div className="flex w-[1293px] shrink-0 bg-linear-to-b from-[#fbfbfb] to-[#e2e2e2]">
              {range(1, 47).map(k => <RulerTick key={k} k={k} />)}
            </div>
            <div className="flex flex-1 bg-linear-to-b from-[#bdd6ee] to-[#a2c0dc] pl-[3px]">
              {range(49, 57).map(k => <RulerTick key={k} k={k} />)}
            </div>
          </div>
          <div className="mt-[7px] ml-[283px] flex h-[7px]">
            {range(1, 11).map(i => (
              <div key={i} className="flex w-[108px] shrink-0 justify-end"><span className="h-full w-[2px] bg-[#777]" /></div>
            ))}
          </div>
          {/* indent markers */}
          <svg width="20" height="45" viewBox="0 0 20 45" className="absolute top-[7px] left-[273px]">
            <path d="M2 1h16v7L12 22l6 10H2l6-10L2 8z" fill="#5f9ce0" stroke="#3a6aa8" />
            <rect x="2" y="34" width="16" height="10" rx="2" fill="#5f9ce0" stroke="#7a8a9c" />
          </svg>
          <svg width="20" height="18" viewBox="0 0 20 18" className="absolute top-[21px] left-[1567px]">
            <path d="M10 1l8 10v6H2v-6z" fill="#8cc0ee" stroke="#3a6aa8" />
          </svg>
        </div>
        <div className="mt-[1px] ml-auto flex h-[24px] w-[30px] shrink-0 flex-col justify-center gap-[8px] border-y-2 border-l-2 border-[#2a5fb0] bg-[#8db0e4] px-[6px]">
          <span className="h-[2px] bg-[#3a5f9a]" />
          <span className="h-[2px] bg-[#3a5f9a]" />
        </div>
      </div>

      {/* Document area */}
      <main className="flex min-h-0 flex-1">
        <div className="flex w-[45px] shrink-0 bg-[#ececec]">
          <div className="ml-[8px] flex w-[28px] flex-col items-center overflow-hidden border-x border-[#ddd] bg-linear-to-r from-[#e4e4e4] to-[#fbfbfb] pt-[15px]">
            {range(0, 32).map(i => <VRulerTick key={i} i={i} />)}
          </div>
        </div>
        <div className="w-[115px] shrink-0 bg-linear-to-b from-[#bec3cd] to-[#9da3ae] shadow-[inset_6px_6px_0_#8e939c,inset_-6px_0_0_#8e939c]" />
        <article className={`w-[1836px] shrink-0 overflow-hidden bg-white pl-[270px] text-[37px] leading-[42.1px] text-black ${serif}`}>
          <div className="-mt-[4px]">
            <div className={`${docLine} tracking-[.5px]`}>anything doesn’t make sense.</div>
            <div className={docLine} />
            <div className={`${docLine} tracking-[-.4px]`}>Files:</div>
            <div className={`${docLine} tracking-[.45px]`}>
              <span className="font-bold tracking-[.9px] underline decoration-[3px] underline-offset-[5px]">1 Demographics</span>: tab 1 is <Squiggle>schizophrenia patients</Squiggle>, tab 2 is controls.
            </div>
            <div className={`${docLine} tracking-[-.2px]`}>A. Cohort: M = Mannheim (Germany), C = Cologne (Germany), H= Hopkins. We had a</div>
            <div className={`${docLine} tracking-[.45px]`}>few of our own patients so we included them too.</div>
            <div className={`${docLine} tracking-[.6px]`}>B. <Squiggle>patient</Squiggle> identification number</div>
            <div className={`${docLine} tracking-[-.5px]`}>C. Age at time of CSF collection</div>
            <div className={`${docLine} tracking-[-.4px]`}>D. Gender</div>
            <div className={`${docLine} tracking-[-1.6px]`}>E. BMI</div>
            <div className={`${docLine} tracking-[.2px]`}>F. Ethnicity (mostly Caucasian)</div>
            <div className={`${docLine} tracking-[-.3px]`}>G. Diagnosis: DSM/ICD-10 diagnosis</div>
            <div className={`${docLine} tracking-[.4px]`}>H. Group: control, schizophrenia, or prodromal. I don’t think we have enough power</div>
            <div className={`${docLine} tracking-[.6px]`}>to run them as three groups so I combined prodromal and schizophrenia. I’m not</div>
            <div className={`${docLine} tracking-[.5px]`}>sure if this was ok. Is it appropriate to do a <Squiggle color="decoration-[#d42020]">ttest</Squiggle> to show they aren’t different from</div>
            <div className={`${docLine} tracking-[-1.6px]`}>SZ?</div>
            <div className={`${docLine} tracking-[.4px]`}>I. Medication: mostly untreated</div>
            <div className={`${docLine} tracking-[.4px]`}>J. Education more or less than 13 years</div>
            <div className={`${docLine} tracking-[.5px]`}>K. <Squiggle>current</Squiggle> smoking status: yes or no</div>
            <div className={docLine} />
            <div className={`${docLine} tracking-[.05px]`}>When selecting patients, I matched for all these factors and the patients were selected</div>
          </div>
        </article>
        <div className="w-[116px] shrink-0 bg-linear-to-b from-[#bec3cd] to-[#9da3ae] shadow-[inset_6px_6px_0_#8e939c,inset_-5px_0_0_#8e939c]" />
        <div className="flex w-[30px] shrink-0 justify-center border-l border-[#ddd] bg-linear-to-r from-[#f2f2f2] to-[#fcfcfc] pt-[36px]">
          <div className="h-[156px] w-[16px] rounded-full bg-[#c8c8c8]" />
        </div>
      </main>
    </div>
  );
}
